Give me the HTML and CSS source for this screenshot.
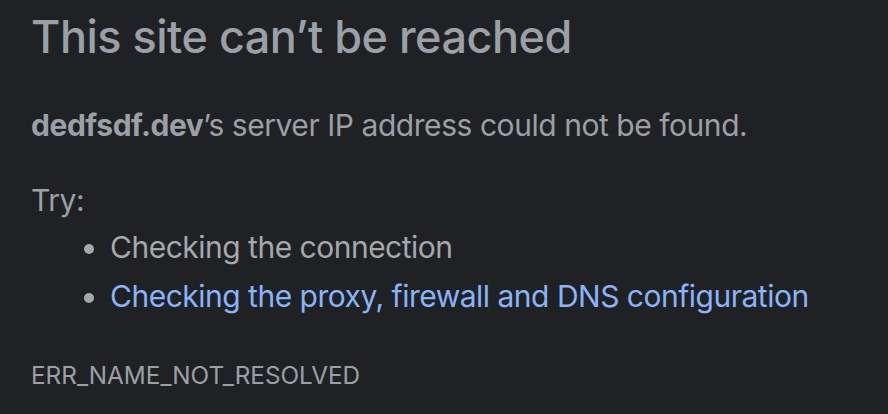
FILE: index.html
```html
<!DOCTYPE html>
<html>
<head>
<meta charset="utf-8">
<link rel="stylesheet" href="styles.css">
</head>
<body>
<div class="page">
  <h1 class="title">This site can’t be reached</h1>
  <p class="desc"><strong>dedfsdf.dev</strong>’s server IP address could not be found.</p>
  <p class="try">Try:</p>
  <ul class="suggestions">
    <li class="item">Checking the connection</li>
    <li class="item"><a class="link" href="#">Checking the proxy, firewall and DNS configuration</a></li>
  </ul>
  <div class="code">ERR_NAME_NOT_RESOLVED</div>
</div>
</body>
</html>
```
FILE: styles.css
```css
html, body {
  margin: 0;
  padding: 0;
  background: #202124;
  height: 100%;
  overflow: hidden;
}
body {
  font-family: Inter, "Noto Sans", sans-serif;
  color: #9aa0a6;
  font-size: 30px;
}
.page {
  padding: 0 0 0 31px;
}
.title {
  margin: 0;
  padding-top: 9px;
  font-size: 45px;
  font-weight: 500;
  line-height: 56px;
  letter-spacing: -0.5px;
}
.desc {
  margin: 0;
  margin-top: 40px;
  line-height: 40px;
  letter-spacing: -0.45px;
}
.desc strong { font-weight: 700; }
.try {
  margin: 0;
  margin-top: 35px;
  line-height: 40px;
  letter-spacing: -0.45px;
}
.suggestions {
  margin: 3px 0 0 0;
  padding-left: 79px;
  letter-spacing: -0.5px;
}
.item {
  line-height: 49px;
  color: #a4a8ac;
}
.link {
  color: #8ab4f8;
  text-decoration: none;
}
.code {
  margin-top: 39px;
  font-size: 24.3px;
  line-height: 30px;
  letter-spacing: 0px;
}
```
